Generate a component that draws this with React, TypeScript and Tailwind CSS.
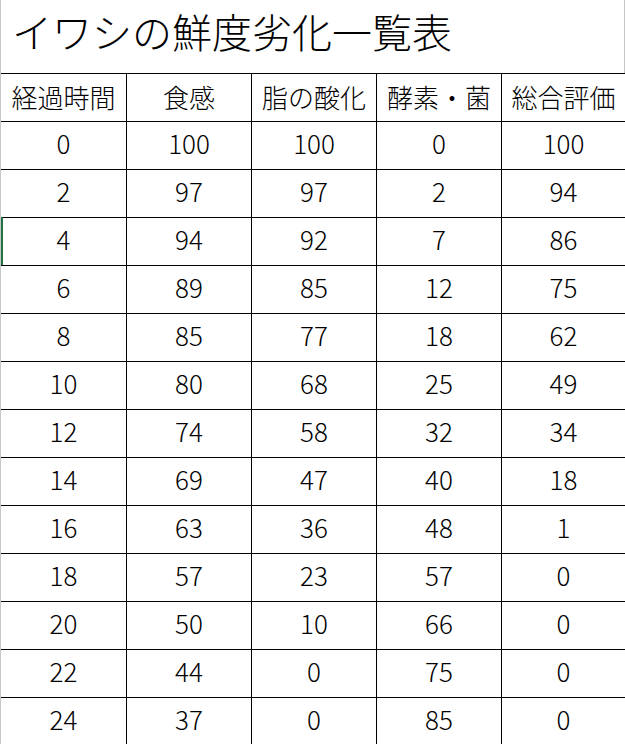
import React from "react";

const headers = ["経過時間", "食感", "脂の酸化", "酵素・菌", "総合評価"];

const rows = [
  [0, 100, 100, 0, 100],
  [2, 97, 97, 2, 94],
  [4, 94, 92, 7, 86],
  [6, 89, 85, 12, 75],
  [8, 85, 77, 18, 62],
  [10, 80, 68, 25, 49],
  [12, 74, 58, 32, 34],
  [14, 69, 47, 40, 18],
  [16, 63, 36, 48, 1],
  [18, 57, 23, 57, 0],
  [20, 50, 10, 66, 0],
  [22, 44, 0, 75, 0],
  [24, 37, 0, 85, 0],
];

function Cell({
  children,
  last,
  num,
}: {
  children: React.ReactNode;
  last?: boolean;
  num?: boolean;
}) {
  return (
    <div
      className={
        "h-[48px] flex items-center justify-center border-b border-black " +
        (last ? "" : "border-r ") +
        (num ? "pb-[6px]" : "pb-[1px]")
      }
    >
      {children}
    </div>
  );
}

export default function App() {
  return (
    <div
      className="relative w-[625px] h-[744px] overflow-hidden bg-white text-black font-light border-l border-[#c6c6c6]"
      style={{ fontFamily: '"Noto Sans CJK JP", "Noto Sans", sans-serif' }}
    >
      {/* selected row marker */}
      <div className="absolute left-0 top-[217px] h-[48px] w-[2px] bg-[#217346]" />

      <div className="h-[73px] flex items-center pl-[11px] pb-[12px] text-[40px] leading-none border-r border-[#c6c6c6]">
        イワシの鮮度劣化一覧表
      </div>

      <div className="grid grid-cols-[126px_125px_125px_125px_1fr] border-t border-black text-[26px] leading-none">
        {headers.map((h, i) => (
          <Cell key={h} last={i === 4}>
            <span className="whitespace-nowrap">{h}</span>
          </Cell>
        ))}
        {rows.map((r, ri) =>
          r.map((v, ci) => (
            <Cell key={ri + "-" + ci} last={ci === 4} num>
              {v}
            </Cell>
          ))
        )}
      </div>
    </div>
  );
}
